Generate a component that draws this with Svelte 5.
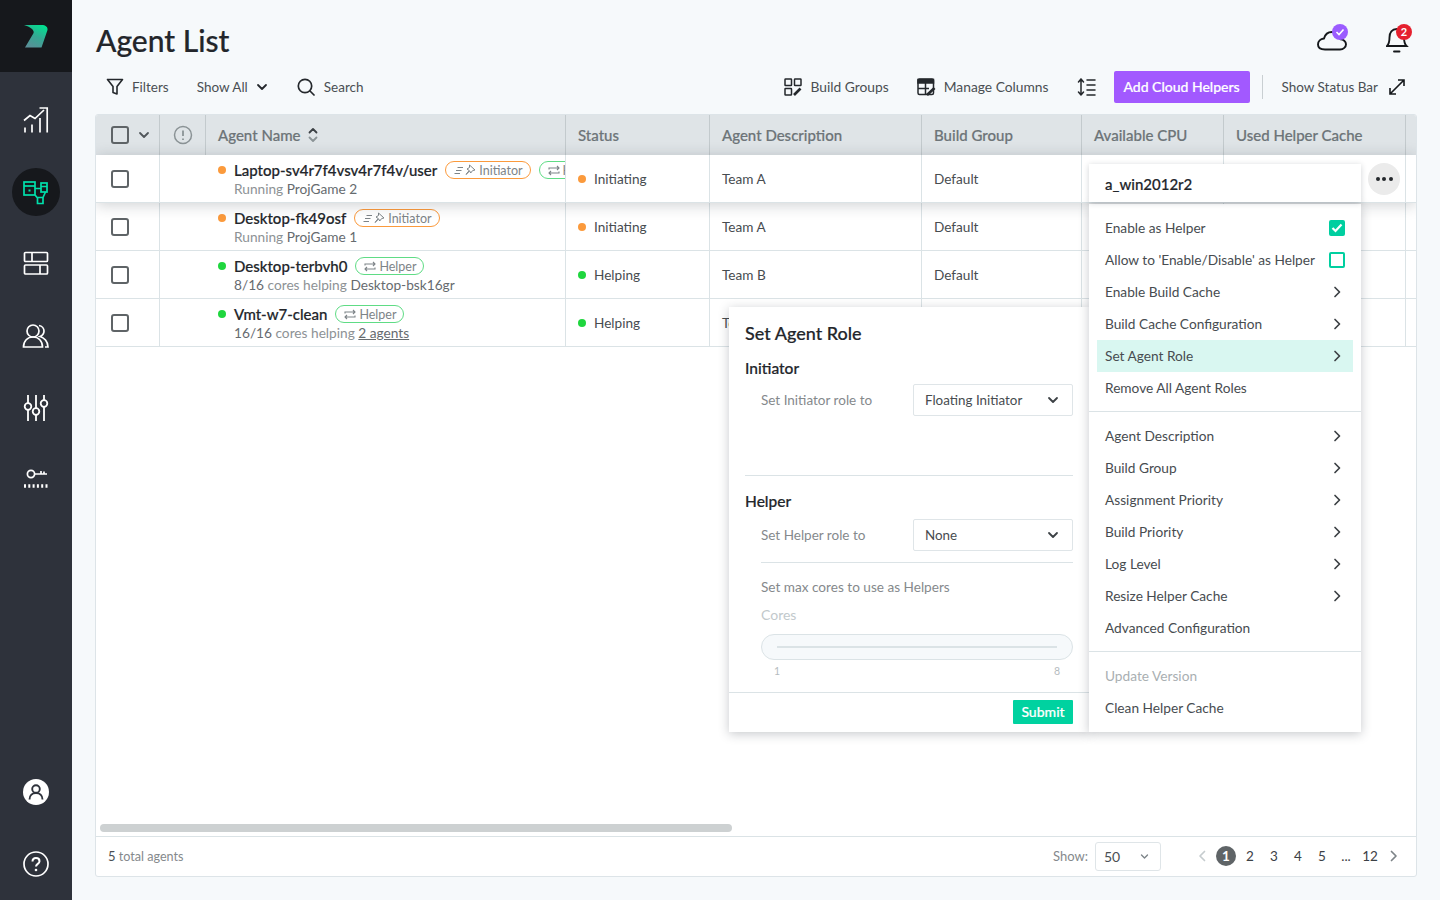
<script>
  const rows = [
    { dot: 'orange', name: 'Laptop-sv4r7f4vsv4r7f4v/user', tags: ['i', 'h'], sub: [['Running ', 0], ['ProjGame 2', 1]], status: 'Initiating', team: 'Team A', raised: true },
    { dot: 'orange', name: 'Desktop-fk49osf', tags: ['i'], sub: [['Running ', 0], ['ProjGame 1', 1]], status: 'Initiating', team: 'Team A' },
    { dot: 'green', name: 'Desktop-terbvh0', tags: ['h'], sub: [['8/16', 1], [' cores helping ', 0], ['Desktop-bsk16gr', 1]], status: 'Helping', team: 'Team B' },
    { dot: 'green', name: 'Vmt-w7-clean', tags: ['h'], sub: [['16/16', 1], [' cores helping ', 0], ['2 agents', 2]], status: 'Helping', team: 'Team B' }
  ];
  const groupA = [
    { t: 'Enable as Helper', check: 'on' },
    { t: "Allow to 'Enable/Disable' as Helper", check: 'off' },
    { t: 'Enable Build Cache', arrow: true },
    { t: 'Build Cache Configuration', arrow: true },
    { t: 'Set Agent Role', arrow: true, active: true },
    { t: 'Remove All Agent Roles' }
  ];
  const groupB = [
    { t: 'Agent Description', arrow: true },
    { t: 'Build Group', arrow: true },
    { t: 'Assignment Priority', arrow: true },
    { t: 'Build Priority', arrow: true },
    { t: 'Log Level', arrow: true },
    { t: 'Resize Helper Cache', arrow: true },
    { t: 'Advanced Configuration' }
  ];
  const groupC = [{ t: 'Update Version', muted: true }, { t: 'Clean Helper Cache' }];
  const groups = [groupA, groupB, groupC];
  const pages = ['2', '3', '4', '5', '...', '12'];
</script>

{#snippet chevronDown(w = 12, c = '#3c4145')}
  <svg width={w} height={w} viewBox="0 0 12 12" fill="none" stroke={c} stroke-width="1.8" stroke-linecap="round" stroke-linejoin="round"><path d="M2 4l4 4 4-4" /></svg>
{/snippet}
{#snippet chevronRight(c = '#3c4145')}
  <svg width="12" height="12" viewBox="0 0 12 12" fill="none" stroke={c} stroke-width="1.7" stroke-linecap="round" stroke-linejoin="round"><path d="M4 1.5l4.5 4.5L4 10.5" /></svg>
{/snippet}

<div class="app">
  <nav class="side">
    <div class="logo">
      <svg width="24" height="23" viewBox="0 0 24 23">
        <defs>
          <linearGradient id="lg" x1="0.75" y1="0" x2="0.25" y2="1"><stop offset="0" stop-color="#00e08f" /><stop offset="0.5" stop-color="#35a893" /><stop offset="1" stop-color="#5a8f98" /></linearGradient>
        </defs>
        <path d="M0 0h17.500c4 0 6.500 2 6 5L17.500 22.500H1l8.600-14.500C10.500 5 6 1.500 0 0z" fill="url(#lg)" />
      </svg>
    </div>
    <div class="nav-items">
      <span class="nav-item">
        <svg width="26" height="26" viewBox="0 0 26 26" fill="none" stroke="#fff" stroke-width="1.700"><path d="M1 13.500l6-5 5 3 9-8.500M16.500 1h7.700v24.500M2 25.500v-5M9 25.500v-8M17 25.500V11" /></svg>
      </span>
      <span class="nav-item on">
        <svg width="26" height="26" viewBox="0 0 26 26" fill="none" stroke="#00e0ab" stroke-width="1.700"><rect x="1" y="3" width="11" height="13" /><path d="M1 7h11" /><rect x="18" y="4" width="6" height="9" /><path d="M18 7.500h6M12 9.500h6M12 16l2.500 3M14.500 18.500h5.500v6h-5.500zM22.500 13l-2.500 5.500" /><rect x="5.500" y="10.500" width="2" height="2" fill="#00e0ab" stroke="none" /></svg>
      </span>
      <span class="nav-item">
        <svg width="26" height="26" viewBox="0 0 26 26" fill="none" stroke="#fff" stroke-width="1.700"><rect x="1.500" y="1.500" width="23" height="9" rx="1" /><rect x="1.500" y="14" width="23" height="9" rx="1" /><path d="M9 1.500v9M17 14v9" /></svg>
      </span>
      <span class="nav-item">
        <svg width="28" height="26" viewBox="0 0 28 26" fill="none" stroke="#fff" stroke-width="1.700"><circle cx="11" cy="8" r="6" /><path d="M1.500 24c0-6 4-10 9.500-10s9.500 4 9.500 10zM17 2.500c3 .5 5 3 5 5.500s-1.500 4.500-4 5.500c4 1 8 5 8 10.500h-3" /></svg>
      </span>
      <span class="nav-item">
        <svg width="26" height="28" viewBox="0 0 26 28" fill="none" stroke="#fff" stroke-width="1.800"><path d="M5 1v8M5 16v11M13 1v13M13 21v6M21 1v5M21 13v14" /><circle cx="5" cy="12.500" r="3.300" /><circle cx="13" cy="17.500" r="3.300" /><circle cx="21" cy="9.500" r="3.300" /></svg>
      </span>
      <span class="nav-item">
        <svg width="26" height="22" viewBox="0 0 26 22" fill="none" stroke="#fff" stroke-width="1.700"><circle cx="8" cy="5" r="3.600" /><path d="M11.500 5H24M18 5V2M21 5V2.500" /><path d="M1 17h24" stroke-width="3.400" stroke-dasharray="2 2.300" /></svg>
      </span>
    </div>
    <div class="nav-bottom">
      <span class="nav-item">
        <svg width="26" height="26" viewBox="0 0 26 26"><circle cx="13" cy="13" r="13" fill="#fff" /><g fill="none" stroke="#2e323b" stroke-width="1.900"><circle cx="13" cy="10" r="3.800" /><path d="M6.500 20.500c0-4 2.800-6.500 6.500-6.500s6.500 2.500 6.500 6.500" /></g></svg>
      </span>
      <span class="nav-item">
        <svg width="26" height="26" viewBox="0 0 26 26" fill="none" stroke="#fff" stroke-width="1.700"><circle cx="13" cy="13" r="12" /><path d="M9.500 10.500c0-2.200 1.600-3.500 3.500-3.500s3.500 1.300 3.500 3.200c0 2.800-3.500 2.600-3.500 5.300" stroke-width="2" /><circle cx="13" cy="19" r="1.300" fill="#fff" stroke="none" /></svg>
      </span>
    </div>
  </nav>

  <main class="main">
    <header class="head">
      <h1>Agent List</h1>
      <div class="head-icons">
        <span class="hi">
          <svg width="32" height="28" viewBox="0 0 32 28"><path d="M9 25.500h15c3.500 0 6-2.500 6-5.200 0-3-2.800-5-5.500-5.100C23.500 10.500 20 8 16 8c-4 0-7 2.700-8 6.500-3.500.4-6 2.800-6 6 0 3 2.500 5 7 5z" fill="none" stroke="#15181b" stroke-width="1.900" /><circle cx="24" cy="8" r="8" fill="#9b5cff" /><path d="M20.500 8l2.500 2.500 4.500-5" fill="none" stroke="#fff" stroke-width="1.600" /></svg>
        </span>
        <span class="hi bell">
          <svg width="26" height="30" viewBox="0 0 26 30"><path d="M1 22h19.500c-2-2-2.500-4.500-2.500-8.500C18 8.500 15.500 5 10.800 5S3.500 8.500 3.500 13.500c0 4-.5 6.500-2.500 8.500zM8 27.500h5.500" fill="none" stroke="#15181b" stroke-width="1.900" stroke-linecap="round" /><circle cx="18" cy="8" r="8" fill="#e5202e" /><text x="18" y="12" text-anchor="middle" class="badge">2</text></svg>
        </span>
      </div>
    </header>

    <div class="toolbar">
      <button class="tool f">
        <svg width="18" height="18" viewBox="0 0 18 18" fill="none" stroke="#24282c" stroke-width="1.600" stroke-linejoin="round"><path d="M1.500 1.500h15l-5.500 7v7.500l-4-1.500V8.500z" /></svg>
        <span>Filters</span>
      </button>
      <button class="tool s"><span>Show All</span> {@render chevronDown(12, '#24282c')}</button>
      <button class="tool q">
        <svg width="18" height="18" viewBox="0 0 18 18" fill="none" stroke="#24282c" stroke-width="1.700" stroke-linecap="round"><circle cx="8" cy="8" r="6.700" /><path d="M13 13l4 4" /></svg>
        <span>Search</span>
      </button>
      <div class="spacer"></div>
      <button class="tool bg">
        <svg width="18" height="18" viewBox="0 0 18 18" fill="none" stroke="#24282c" stroke-width="1.500"><rect x="1" y="1" width="6.500" height="6.500" rx=".6" /><rect x="10.500" y="1" width="6.500" height="6.500" rx=".6" /><rect x="1" y="10.500" width="6.500" height="6.500" rx=".6" /><path d="M10 17l6.500-6.500" stroke-width="2.700" /></svg>
        <span>Build Groups</span>
      </button>
      <button class="tool m">
        <svg width="19" height="18" viewBox="0 0 19 18" fill="none" stroke="#24282c" stroke-width="1.500"><rect x="1" y="1" width="15.500" height="15.500" rx="1.500" /><path d="M1 1.500h15.500V5H1z" fill="#24282c" /><path d="M1 10.500h11M8.500 5v11" /><path d="M10 17l7.500-7" stroke-width="2.700" /></svg>
        <span>Manage Columns</span>
      </button>
      <button class="tool sort" aria-label="Row height">
        <svg width="19" height="18" viewBox="0 0 19 18" fill="none" stroke="#24282c" stroke-width="1.500" stroke-linecap="round" stroke-linejoin="round"><path d="M4 1v16M1.500 4L4 1l2.500 3M1.500 14L4 17l2.500-3M10 2h8M10 7h8M10 12h8M10 17h8" /></svg>
      </button>
      <button class="cta">Add Cloud Helpers</button>
      <span class="vr"></span>
      <button class="tool st">
        <span>Show Status Bar</span>
        <svg width="16" height="16" viewBox="0 0 16 16" fill="none" stroke="#15181b" stroke-width="1.600"><path d="M1 15L15 1M9 1h6v6M1 9v6h6" /></svg>
      </button>
    </div>

    <section class="panel">
      <div class="thead">
        <div class="th c1"><span class="cb head-cb"></span>{@render chevronDown(12, '#50565a')}</div>
        <div class="th c2">
          <svg width="20" height="20" viewBox="0 0 20 20" fill="none" stroke="#8b9396" stroke-width="1.500"><circle cx="10" cy="10" r="8.500" /><path d="M10 5.500v5.500M10 13.500v1.500" stroke-width="1.800" /></svg>
        </div>
        <div class="th sorted"><span>Agent Name</span>
          <svg width="10" height="16" viewBox="0 0 10 16" fill="none" stroke-width="1.800" stroke-linecap="round" stroke-linejoin="round"><path d="M1.500 5.500L5 2l3.500 3.500" stroke="#3c4145" /><path d="M1.500 10.500L5 14l3.500-3.500" stroke="#8b9396" /></svg>
        </div>
        <div class="th"><span>Status</span></div>
        <div class="th"><span>Agent Description</span></div>
        <div class="th"><span>Build Group</span></div>
        <div class="th"><span>Available CPU</span></div>
        <div class="th"><span>Used Helper Cache</span></div>
        <div class="th last"></div>
      </div>
      <div class="tbody">
        {#each rows as r}
          <div class="tr" class:raised={r.raised}>
            <div class="td c1"><span class="cb"></span></div>
            <div class="td name">
              <div class="line1">
                <i class="dot {r.dot}"></i><b>{r.name}</b>
                {#each r.tags as t}
                  {#if t === 'i'}
                    <span class="tag ini">
                      <svg width="22" height="12" viewBox="0 0 22 12" fill="none" stroke="#7d8488" stroke-width="1"><path d="M3.500 3.500H9M2 6.500h5.500M.5 9.500H6" /><path d="M15.500 1l5.500 5-2.300.5-2 2.500-1-2-3.700 3.500 3.200-4-2.200-1.500 2.500-1.500z" /></svg>
                      Initiator
                    </span>
                  {:else}
                    <span class="tag hlp">
                      <svg width="12" height="11" viewBox="0 0 12 11" fill="none" stroke="#7d8488" stroke-width="1.100"><path d="M1 4.500V3h10M9 1l2 2-2 2M11 6.500V8H1M3 6L1 8l2 2" /></svg>
                      Helper
                    </span>
                  {/if}
                {/each}
              </div>
              <div class="line2">
                {#each r.sub as s}
                  {#if s[1] === 0}<span>{s[0]}</span>{:else if s[1] === 1}<em>{s[0]}</em>{:else}<u>{s[0]}</u>{/if}
                {/each}
              </div>
            </div>
            <div class="td"><i class="dot {r.dot} st-dot"></i>{r.status}</div>
            <div class="td">{r.team}</div>
            <div class="td">Default</div>
            <div class="td"></div>
            <div class="td"></div>
            <div class="td last"></div>
          </div>
        {/each}
      </div>
      <div class="scroll"><span></span></div>
      <footer class="foot">
        <div class="total"><b>5</b> total agents</div>
        <div class="pager">
          <span class="show">Show:</span>
          <span class="size">50 {@render chevronDown(9, '#7d8488')}</span>
          <span class="pg arrow first">
            <svg width="8" height="12" viewBox="0 0 8 12" fill="none" stroke="#c6cccf" stroke-width="1.700" stroke-linecap="round" stroke-linejoin="round"><path d="M6.500 1.500L2 6l4.500 4.500" /></svg>
          </span>
          <span class="pg cur">1</span>
          {#each pages as p}<span class="pg">{p}</span>{/each}
          <span class="pg arrow">
            <svg width="8" height="12" viewBox="0 0 8 12" fill="none" stroke="#7d8488" stroke-width="1.700" stroke-linecap="round" stroke-linejoin="round"><path d="M1.500 1.500L6 6l-4.500 4.500" /></svg>
          </span>
        </div>
      </footer>
    </section>

    <button class="more" aria-label="More actions"><i></i><i></i><i></i></button>

    <div class="menu-title"><span>a_win2012r2</span></div>
    <div class="menu">
      {#each groups as g}
        <div class="mgroup">
          {#each g as it}
            <div class="mi" class:active={it.active} class:muted={it.muted}>
              <span>{it.t}</span>
              {#if it.check === 'on'}
                <span class="mc on"><svg width="12" height="10" viewBox="0 0 12 10" fill="none" stroke="#fff" stroke-width="2.200"><path d="M1.500 5l3 3 6-6.500" /></svg></span>
              {:else if it.check === 'off'}
                <span class="mc"></span>
              {:else if it.arrow}
                {@render chevronRight()}
              {/if}
            </div>
          {/each}
        </div>
      {/each}
    </div>

    <div class="role">
      <div class="role-body">
        <h2>Set Agent Role</h2>
        <h3>Initiator</h3>
        <div class="field"><label for="ini">Set Initiator role to</label><span id="ini" class="select"><span>Floating Initiator</span> {@render chevronDown(12)}</span></div>
        <hr class="sep" />
        <h3 class="h2">Helper</h3>
        <div class="field f2"><label for="hp">Set Helper role to</label><span id="hp" class="select"><span>None</span> {@render chevronDown(12)}</span></div>
        <div class="indent">
          <hr class="sep2" />
          <p class="maxc">Set max cores to use as Helpers</p>
          <p class="cores">Cores</p>
          <div class="slider"><span></span></div>
          <div class="ends"><span>1</span><span>8</span></div>
        </div>
      </div>
      <div class="role-foot"><button class="submit">Submit</button></div>
    </div>
  </main>
</div>

<style>
  :global(body) { margin: 0; background: #f6f9fb; font-family: "Lato", "Open Sans", sans-serif; color: #24282c; }
  * { box-sizing: border-box; }
  button { font: inherit; border: 0; background: none; padding: 0; color: inherit; }
  .app { display: flex; height: 900px; width: 1440px; overflow: hidden; }

  .side { width: 72px; background: #2e323b; display: flex; flex-direction: column; flex: none; }
  .logo { height: 72px; background: #16181c; display: flex; align-items: center; justify-content: center; margin-bottom: 24px; }
  .nav-items { display: flex; flex-direction: column; gap: 24px; flex: 1; }
  .nav-bottom { display: flex; flex-direction: column; gap: 24px; padding-bottom: 12px; }
  .nav-item { width: 48px; height: 48px; margin: 0 12px; display: flex; align-items: center; justify-content: center; border-radius: 50%; }
  .nav-item.on { background: #16181c; }

  .main { flex: 1; position: relative; padding: 0 23px 23px 23px; display: flex; flex-direction: column; min-width: 0; }
  .head { height: 71px; display: flex; justify-content: space-between; padding: 0 0 0 1px; }
  h1 { font-size: 30px; font-weight: 500; margin: 22px 0 0; line-height: 36px; color: #23262b; -webkit-text-stroke: .2px currentColor; }
  .head-icons { display: flex; gap: 38px; margin: 24px 5px 0 0; align-items: flex-start; }
  .hi { display: flex; }
  .badge { font: 700 11px "Lato", sans-serif; fill: #fff; }

  .toolbar { height: 32px; display: flex; align-items: center; padding-left: 11px; margin-bottom: 11px; }
  .tool { display: inline-flex; align-items: center; gap: 8px; color: #4a4f53; font-size: 13.500px; white-space: nowrap; }
  .tool span { margin-top: -1px; }
  .tool.s { margin-left: 28px; }
  .tool.q { margin-left: 29px; gap: 9px; }
  .spacer { flex: 1; }
  .tool.bg { gap: 9px; font-size: 13.800px; }
  .tool.m { margin-left: 28px; font-size: 13.800px; }
  .tool.sort { margin-left: 28px; }
  .cta { margin-left: 18px; width: 136px; height: 32px; background: #a259ff; color: #fff; border-radius: 2px; font-size: 14px; font-weight: 500; -webkit-text-stroke: .2px currentColor; padding-bottom: 2px; }
  .vr { width: 1px; height: 24px; background: #c9cfd2; margin: 0 19px 0 12px; }
  .tool.st { gap: 11px; margin-right: 12px; }

  .panel { flex: 1; min-height: 0; background: #fff; border: 1px solid #dde4e8; border-radius: 3px; display: flex; flex-direction: column; overflow: hidden; }
  .thead, .tr { display: grid; }
  .thead { grid-template-columns: 64px 46px 360px 144px 212px 160px 142px 182px 1fr; height: 40px; background: #dfe4e7; position: relative; }
  .tr { grid-template-columns: 64px 406px 144px 212px 160px 142px 182px 1fr; height: 48px; border-bottom: 1px solid #dbe3e6; background: #fff; }
  .tr.raised { position: relative; z-index: 2; box-shadow: 0 2px 14px rgba(30, 40, 50, .22); }
  .th { display: flex; align-items: center; padding-left: 12px; gap: 8px; border-right: 1px solid #c3cacd; font-size: 15px; font-weight: 500; color: #6d7478; white-space: nowrap; -webkit-text-stroke: .2px currentColor; }
  .th span { margin-top: -1px; }
  .th.c1 { padding-left: 15px; gap: 9px; }
  .th.c2 { justify-content: center; padding-left: 0; }
  .th.last { border-right: 0; }
  .td { display: flex; align-items: center; padding-left: 12px; border-right: 1px solid #dbe3e6; font-size: 13.600px; color: #474c50; min-width: 0; }
  .td.c1 { padding-left: 15px; }
  .td.last { border-right: 0; }
  .cb { display: block; width: 18px; height: 18px; border: 2px solid #5f6467; border-radius: 3px; background: #fff; }
  .head-cb { background: transparent; margin-top: 0; }

  .name { display: block; padding: 6px 0 0 74px; overflow: hidden; white-space: nowrap; }
  .line1 { display: flex; align-items: center; gap: 8px; height: 18px; position: relative; }
  .line1 b { font-size: 15px; font-weight: 500; color: #23262b; -webkit-text-stroke: .2px currentColor; }
  .line2 { font-size: 13.700px; color: #8d9295; height: 19px; line-height: 19px; }
  .line2 em { font-style: normal; color: #666b6f; }
  .line2 u { color: #666b6f; }
  .dot { display: block; width: 8px; height: 8px; border-radius: 50%; flex: none; }
  .dot.orange { background: #fb9a3c; }
  .dot.green { background: #1fd63e; }
  .line1 .dot { position: absolute; left: -16px; top: 5px; }
  .st-dot { margin-right: 8px; }
  .tag { display: inline-flex; align-items: center; gap: 3px; height: 18px; padding: 0 7px 0 8px; border-radius: 9px; font-size: 12.500px; color: #7d8488; background: #fff; flex: none; }
  .tag.ini { border: 1px solid #fb9a3c; }
  .tag.hlp { border: 1px solid #5fdc85; }

  .tbody { flex: 1; min-height: 0; }
  .scroll { height: 12px; padding: 0 0 0 4px; }
  .scroll span { display: block; width: 632px; height: 8px; border-radius: 4px; background: #cdd1d2; }
  .foot { height: 40px; flex: none; border-top: 1px solid #dbe3e6; display: flex; align-items: center; justify-content: space-between; padding: 0 10px 0 12px; font-size: 12.600px; color: #85898c; }
  .total { margin-top: -2px; }
  .total b { font-weight: 400; color: #4a4f53; font-size: 13px; }
  .pager { display: flex; align-items: center; }
  .show { color: #85898c; margin-right: 7px; font-size: 13px; margin-top: -2px; }
  .size { display: flex; align-items: center; justify-content: space-between; width: 66px; height: 29px; border: 1px solid #dfe5e8; border-radius: 3px; padding: 0 11px 0 8px; color: #4a4f53; font-size: 14px; margin-right: 31px; }
  .pg { width: 24px; height: 20px; display: flex; align-items: center; justify-content: center; color: #3c4145; font-size: 13.500px; margin-top: -2px; }
  .pg.arrow { width: 24px; }
  .pg.first { width: 20px; margin-right: 4px; }
  .pg.cur { width: 20px; background: #5f6467; color: #fff; border-radius: 50%; font-weight: 700; margin-right: 2px; }

  .more { position: absolute; left: 1296px; top: 163px; width: 32px; height: 32px; border-radius: 50%; background: #ebebeb; display: flex; align-items: center; justify-content: center; gap: 2.500px; z-index: 5; }
  .more i { width: 4px; height: 4px; border-radius: 50%; background: #24282c; display: block; }
  .menu-title { position: absolute; left: 1017px; top: 164px; width: 272px; height: 38px; background: #fff; display: flex; align-items: center; padding: 1px 16px 0; font-size: 15px; font-weight: 500; color: #23262b; z-index: 5; -webkit-text-stroke: .2px currentColor; box-shadow: 0 1px 6px rgba(30, 40, 50, .2); }
  .menu { position: absolute; left: 1017px; top: 204px; width: 272px; height: 528px; background: #fff; box-shadow: 0 2px 10px rgba(30, 40, 50, .25); z-index: 4; display: flex; flex-direction: column; }
  .mgroup { padding: 8px 8px 7px; border-bottom: 1px solid #dbe3e6; }
  .mgroup:last-child { border-bottom: 0; }
  .mi { height: 32px; display: flex; align-items: center; justify-content: space-between; font-size: 13.700px; color: #474c50; padding: 0 10px 0 8px; white-space: nowrap; }
  .mi > span:first-child { margin-top: -2px; }
  .mi.active { background: #d9f7f1; }
  .mi.muted { color: #a9afb2; }
  .mc { width: 16px; height: 16px; border: 2px solid #00cfa0; border-radius: 2px; display: flex; align-items: center; justify-content: center; margin-right: -2px; }
  .mc.on { background: #00cfa0; }

  .role { position: absolute; left: 657px; top: 307px; width: 360px; height: 425px; background: #fff; box-shadow: 0 2px 10px rgba(30, 40, 50, .25); z-index: 3; display: flex; flex-direction: column; }
  .role-body { flex: 1; padding: 0 16px; }
  h2 { font-size: 18px; font-weight: 500; margin: 15px 0 0; color: #23262b; line-height: 22px; -webkit-text-stroke: .2px currentColor; }
  h3 { font-size: 15.500px; font-weight: 500; margin: 14px 0 0; line-height: 20px; color: #23262b; -webkit-text-stroke: .2px currentColor; }
  h3.h2 { margin-top: 15px; }
  .field { display: flex; align-items: center; justify-content: space-between; padding-left: 16px; margin-top: 6px; font-size: 13.500px; }
  .field.f2 { margin-top: 8px; }
  label { color: #85898c; margin-top: -1px; }
  .select { width: 160px; height: 32px; border: 1px solid #dfe5e8; border-radius: 2px; display: flex; align-items: center; justify-content: space-between; padding: 0 13px 0 11px; color: #474c50; font-size: 13.400px; }
  .select span { margin-top: -1px; }
  .sep { height: 1px; border: 0; background: #dbe3e6; margin: 59px 0 0; }
  .indent { padding-left: 16px; }
  .sep2 { height: 1px; border: 0; background: #dbe3e6; margin: 11px 0 0; }
  .maxc { margin: 15px 0 0; font-size: 13.600px; color: #85898c; line-height: 18px; }
  .cores { margin: 10px 0 0; font-size: 14px; color: #c2c9cc; line-height: 18px; }
  .slider { margin-top: 10px; height: 26px; border-radius: 13px; background: #f6f9fb; border: 1px solid #dbe3e6; display: flex; align-items: center; padding: 0 15px; }
  .slider span { display: block; width: 100%; height: 2px; background: #dbe3e6; }
  .ends { display: flex; justify-content: space-between; padding: 0 13px; font-size: 10.500px; color: #b5bcbf; margin-top: 5px; }
  .role-foot { height: 40px; border-top: 1px solid #dbe3e6; display: flex; justify-content: flex-end; align-items: flex-start; padding: 7px 16px 0; flex: none; }
  .submit { width: 60px; height: 24px; background: #00d2a0; color: #fff; font-size: 14px; font-weight: 500; border-radius: 1px; padding-bottom: 2px; -webkit-text-stroke: .2px currentColor; }
</style>
